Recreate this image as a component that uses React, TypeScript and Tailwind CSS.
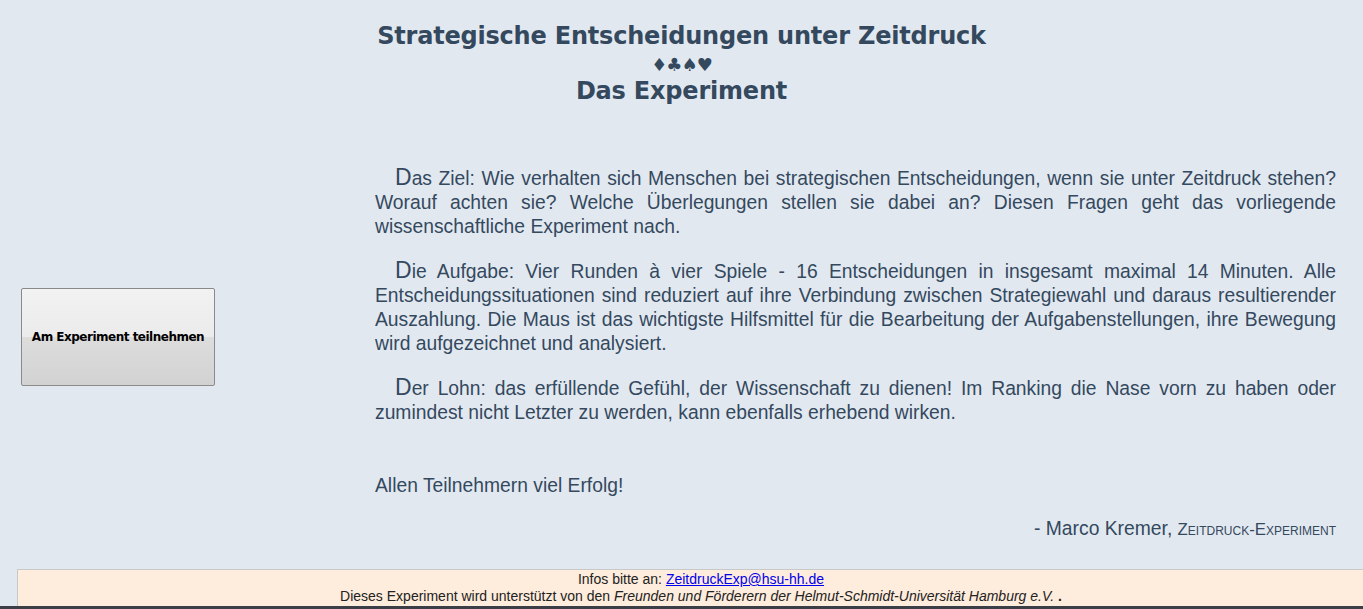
import React from "react";

const paragraphs = [
  "Das Ziel: Wie verhalten sich Menschen bei strategischen Entscheidungen, wenn sie unter Zeitdruck stehen? Worauf achten sie? Welche Überlegungen stellen sie dabei an? Diesen Fragen geht das vorliegende wissenschaftliche Experiment nach.",
  "Die Aufgabe: Vier Runden à vier Spiele - 16 Entscheidungen in insgesamt maximal 14 Minuten. Alle Entscheidungssituationen sind reduziert auf ihre Verbindung zwischen Strategiewahl und daraus resultierender Auszahlung. Die Maus ist das wichtigste Hilfsmittel für die Bearbeitung der Aufgabenstellungen, ihre Bewegung wird aufgezeichnet und analysiert.",
  "Der Lohn: das erfüllende Gefühl, der Wissenschaft zu dienen! Im Ranking die Nase vorn zu haben oder zumindest nicht Letzter zu werden, kann ebenfalls erhebend wirken.",
];

const App = () => {
  return (
    <div className="relative h-[609px] w-full overflow-hidden bg-[#e2e8f0] font-['Liberation_Sans',Arial,sans-serif] text-[#34495e]">
      {/* header */}
      <div className="pt-[23px] text-center font-['DejaVu_Sans',Tahoma,sans-serif] text-[24px] font-bold leading-[27.5px] tracking-[-0.2px] text-[#34495e]">
        <div>Strategische Entscheidungen unter Zeitdruck</div>
        <div className="text-[18px] tracking-[-1px]">♦♣♠♥</div>
        <div>Das Experiment</div>
      </div>

      <div className="flex">
        <div className="w-[375px] shrink-0 pl-[21px] pt-[182px]">
          <button className="flex h-[98px] w-[194px] items-center justify-center rounded-[2px] border border-[#8a8a8a] bg-[linear-gradient(#f2f2f2_0%,#ebebeb_50%,#dddddd_50%,#d2d2d2_100%)] font-['DejaVu_Sans',Tahoma,sans-serif] text-[12px] font-bold tracking-[-0.5px] text-black">
            Am Experiment teilnehmen
          </button>
        </div>

        <div className="w-[961px] pt-[60px] text-[19.3px] leading-[24px]">
          {paragraphs.map((p, i) => (
            <p key={i} className="mb-[20px] indent-[20px] text-justify first-letter:text-[23px] first-letter:leading-none">
              {p}
            </p>
          ))}
          <p className="mt-[49px]">Allen Teilnehmern viel Erfolg!</p>
          <p className="mt-[19px] text-right">
            - Marco Kremer,{" "}
            <span className="text-[16.8px] [font-variant:small-caps]">Zeitdruck-Experiment</span>
          </p>
        </div>
      </div>

      {/* footer */}
      <div className="absolute left-[17px] right-[-22px] top-[569px] h-[38px] border border-[#c8c8c8] bg-[#feecdc] pt-[1px] text-center text-[14px] leading-[17px] text-[#222]">
        <div>
          Infos bitte an:{" "}
          <a href="#" className="text-[#0000ee] underline">
            ZeitdruckExp@hsu-hh.de
          </a>
        </div>
        <div>
          Dieses Experiment wird unterstützt von den{" "}
          <i>Freunden und Förderern der Helmut-Schmidt-Universität Hamburg e.V.</i> <b>.</b>
        </div>
      </div>
      <div className="absolute bottom-0 left-0 h-[3px] w-full bg-[#3a3f47]" />
    </div>
  );
};

export default App;
